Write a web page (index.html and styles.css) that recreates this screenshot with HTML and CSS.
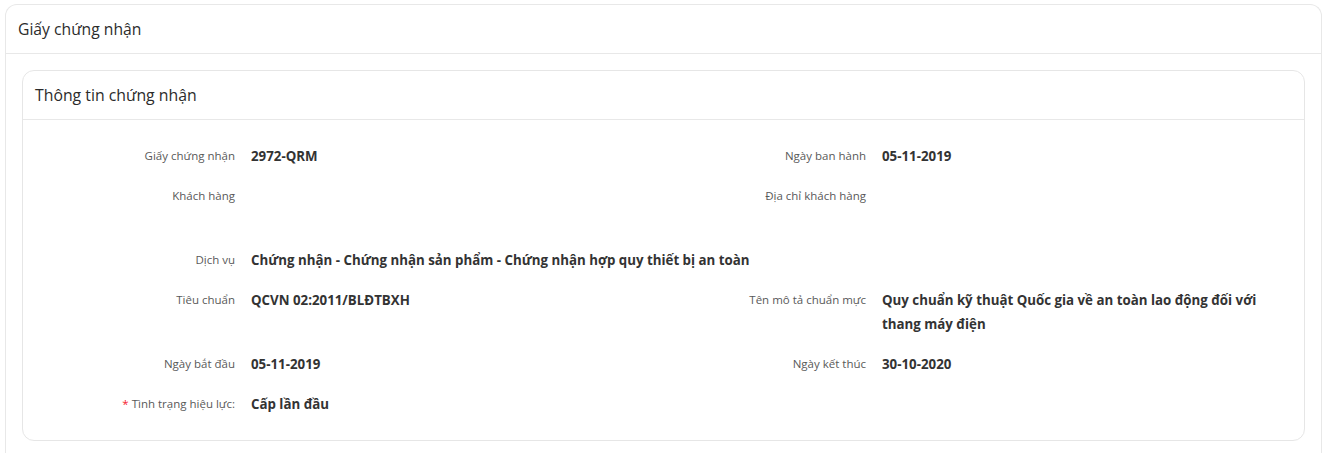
FILE: index.html
```html
<!DOCTYPE html>
<html lang="vi">
<head>
<meta charset="utf-8">
<title>Giấy chứng nhận</title>
<link rel="stylesheet" href="styles.css">
</head>
<body>
<div class="card">
  <div class="card-head">Giấy chứng nhận</div>
  <div class="card-body">
    <div class="inner">
      <div class="inner-head">Thông tin chứng nhận</div>
      <div class="inner-body">
        <div class="row">
          <div class="field"><div class="label">Giấy chứng nhận</div><div class="value">2972-QRM</div></div>
          <div class="field"><div class="label">Ngày ban hành</div><div class="value">05-11-2019</div></div>
        </div>
        <div class="row">
          <div class="field"><div class="label">Khách hàng</div><div class="value"></div></div>
          <div class="field"><div class="label">Địa chỉ khách hàng</div><div class="value tall"></div></div>
        </div>
        <div class="row">
          <div class="field wide"><div class="label">Dịch vụ</div><div class="value">Chứng nhận - Chứng nhận sản phẩm - Chứng nhận hợp quy thiết bị an toàn</div></div>
        </div>
        <div class="row">
          <div class="field"><div class="label">Tiêu chuẩn</div><div class="value">QCVN 02:2011/BLĐTBXH</div></div>
          <div class="field"><div class="label">Tên mô tả chuẩn mực</div><div class="value">Quy chuẩn kỹ thuật Quốc gia về an toàn lao động đối với<br>thang máy điện</div></div>
        </div>
        <div class="row">
          <div class="field"><div class="label">Ngày bắt đầu</div><div class="value">05-11-2019</div></div>
          <div class="field"><div class="label">Ngày kết thúc</div><div class="value">30-10-2020</div></div>
        </div>
        <div class="row">
          <div class="field"><div class="label"><span class="req">*</span> Tình trạng hiệu lực:</div><div class="value">Cấp lần đầu</div></div>
        </div>
      </div>
    </div>
  </div>
</div>
</body>
</html>
```
FILE: styles.css
```css
html, body {
  margin: 0;
  background: #ffffff;
}
body {
  padding: 4px 12px 0 5px;
  font-family: "Open Sans", "Noto Sans", "Liberation Sans", sans-serif;
  color: #333333;
}
.card {
  border: 1px solid #e8e8e8;
  border-bottom: none;
  border-radius: 12px 12px 0 0;
  height: 449px;
  overflow: hidden;
  box-sizing: border-box;
}
.card-head {
  height: 48px;
  border-bottom: 1px solid #e8e8e8;
  padding: 0 12px;
  display: flex;
  align-items: center;
  font-size: 15.7px;
  color: #2b2b2b;
}
.card-body {
  padding: 16px;
}
.inner {
  border: 1px solid #e6e6e6;
  border-radius: 12px;
}
.inner-head {
  height: 48px;
  border-bottom: 1px solid #e8e8e8;
  padding: 0 12px;
  display: flex;
  align-items: center;
  font-size: 15.8px;
  color: #2b2b2b;
}
.inner-body {
  padding: 24px 12px 8px;
}
.row {
  display: grid;
  grid-template-columns: 1fr 1fr;
  column-gap: 5px;
  margin-bottom: 16px;
}
.field {
  display: flex;
  align-items: flex-start;
}
.field.wide {
  grid-column: 1 / span 2;
}
.label {
  width: 200px;
  flex: none;
  text-align: right;
  font-size: 11.5px;
  line-height: 24px;
  color: #595959;
}
.req {
  color: #f5222d;
}
.value {
  margin-left: 16px;
  font-size: 13.3px;
  font-weight: 700;
  line-height: 24px;
  min-height: 24px;
  color: #333333;
}
.value.tall {
  min-height: 48px;
}
```
